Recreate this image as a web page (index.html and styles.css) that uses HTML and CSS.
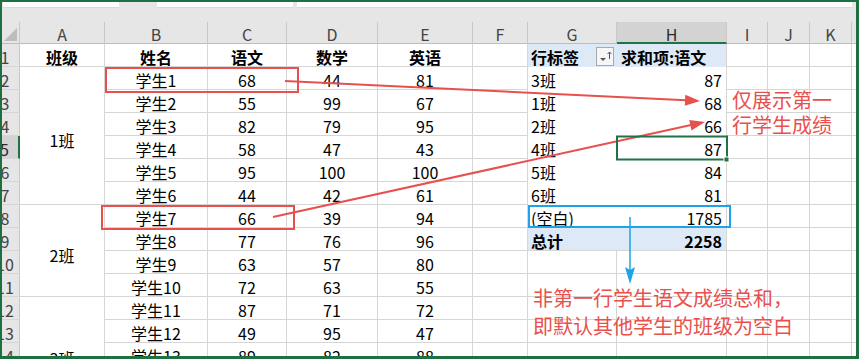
FILE: index.html
```html
<!DOCTYPE html>
<html lang="zh-CN">
<head>
<meta charset="utf-8">
<title>数据透视表</title>
<link rel="stylesheet" href="styles.css">
</head>
<body>
<div class="frame">
  <div class="topbar">
    <div class="tb tb1"></div><div class="tb tb2"></div><div class="tb tb3"></div>
  </div>
  <div class="band"></div>
  <div class="sheet">
    <div class="corner"><span class="tri"></span></div>
    <div class="ch">A</div><div class="ch">B</div><div class="ch">C</div><div class="ch">D</div><div class="ch">E</div><div class="ch">F</div><div class="ch">G</div><div class="ch sel">H</div><div class="ch">I</div><div class="ch">J</div><div class="ch">K</div><div class="ch"></div>

    <div class="rh">1</div>
    <div class="c ctr b">班级</div><div class="c ctr b">姓名</div><div class="c ctr b">语文</div><div class="c ctr b">数学</div><div class="c ctr b">英语</div><div class="c"></div>
    <div class="c pg pvh">行标签<span class="dd"><svg width="18" height="19" viewBox="0 0 18 19"><rect x="0.5" y="0.5" width="17" height="18" fill="#f6f6f6" stroke="#a9a9a9"/><polygon points="4,11 10,11 7,14" fill="#555"/><line x1="13.5" y1="5" x2="13.5" y2="12" stroke="#555" stroke-width="1"/><polyline points="11.5,7 13.5,5 15.5,7" fill="none" stroke="#555" stroke-width="1"/></svg></span></div>
    <div class="c ph pvh phl">求和项:语文</div>
    <div class="c"></div><div class="c"></div><div class="c"></div><div class="c"></div>

    <div class="rh">2</div>
    <div class="c m m1">1班</div>
    <div class="c ctr">学生1</div><div class="c ctr">68</div><div class="c ctr">44</div><div class="c ctr">81</div><div class="c"></div>
    <div class="c pg">3班</div><div class="c ph">87</div>
    <div class="c"></div><div class="c"></div><div class="c"></div><div class="c"></div>

    <div class="rh">3</div>
    <div class="c ctr">学生2</div><div class="c ctr">55</div><div class="c ctr">99</div><div class="c ctr">67</div><div class="c"></div>
    <div class="c pg">1班</div><div class="c ph">68</div>
    <div class="c"></div><div class="c"></div><div class="c"></div><div class="c"></div>

    <div class="rh">4</div>
    <div class="c ctr">学生3</div><div class="c ctr">82</div><div class="c ctr">79</div><div class="c ctr">95</div><div class="c"></div>
    <div class="c pg">2班</div><div class="c ph">66</div>
    <div class="c"></div><div class="c"></div><div class="c"></div><div class="c"></div>

    <div class="rh sel">5</div>
    <div class="c ctr">学生4</div><div class="c ctr">58</div><div class="c ctr">47</div><div class="c ctr">43</div><div class="c"></div>
    <div class="c pg">4班</div><div class="c ph">87</div>
    <div class="c"></div><div class="c"></div><div class="c"></div><div class="c"></div>

    <div class="rh">6</div>
    <div class="c ctr">学生5</div><div class="c ctr">95</div><div class="c ctr">100</div><div class="c ctr">100</div><div class="c"></div>
    <div class="c pg">5班</div><div class="c ph">84</div>
    <div class="c"></div><div class="c"></div><div class="c"></div><div class="c"></div>

    <div class="rh">7</div>
    <div class="c ctr">学生6</div><div class="c ctr">44</div><div class="c ctr">42</div><div class="c ctr">61</div><div class="c"></div>
    <div class="c pg">6班</div><div class="c ph">81</div>
    <div class="c"></div><div class="c"></div><div class="c"></div><div class="c"></div>

    <div class="rh">8</div>
    <div class="c m m2">2班</div>
    <div class="c ctr">学生7</div><div class="c ctr">66</div><div class="c ctr">39</div><div class="c ctr">94</div><div class="c"></div>
    <div class="c pg">(空白)</div><div class="c ph">1785</div>
    <div class="c"></div><div class="c"></div><div class="c"></div><div class="c"></div>

    <div class="rh">9</div>
    <div class="c ctr">学生8</div><div class="c ctr">77</div><div class="c ctr">76</div><div class="c ctr">96</div><div class="c"></div>
    <div class="c pg tot">总计</div><div class="c ph tot">2258</div>
    <div class="c"></div><div class="c"></div><div class="c"></div><div class="c"></div>

    <div class="rh">10</div>
    <div class="c ctr">学生9</div><div class="c ctr">63</div><div class="c ctr">57</div><div class="c ctr">80</div><div class="c"></div>
    <div class="c"></div><div class="c"></div>
    <div class="c"></div><div class="c"></div><div class="c"></div><div class="c"></div>

    <div class="rh">11</div>
    <div class="c ctr">学生10</div><div class="c ctr">72</div><div class="c ctr">63</div><div class="c ctr">55</div><div class="c"></div>
    <div class="c"></div><div class="c"></div>
    <div class="c"></div><div class="c"></div><div class="c"></div><div class="c"></div>

    <div class="rh">12</div>
    <div class="c m m3">3班</div>
    <div class="c ctr">学生11</div><div class="c ctr">87</div><div class="c ctr">71</div><div class="c ctr">72</div><div class="c"></div>
    <div class="c"></div><div class="c"></div>
    <div class="c"></div><div class="c"></div><div class="c"></div><div class="c"></div>

    <div class="rh">13</div>
    <div class="c ctr">学生12</div><div class="c ctr">49</div><div class="c ctr">95</div><div class="c ctr">47</div><div class="c"></div>
    <div class="c"></div><div class="c"></div>
    <div class="c"></div><div class="c"></div><div class="c"></div><div class="c"></div>

    <div class="rh">14</div>
    <div class="c ctr">学生13</div><div class="c ctr">89</div><div class="c ctr">82</div><div class="c ctr">88</div><div class="c"></div>
    <div class="c"></div><div class="c"></div>
    <div class="c"></div><div class="c"></div><div class="c"></div><div class="c"></div>

    <div class="rh">15</div>
    <div class="c"></div><div class="c"></div><div class="c"></div><div class="c"></div><div class="c"></div>
    <div class="c"></div><div class="c"></div>
    <div class="c"></div><div class="c"></div><div class="c"></div><div class="c"></div>

    <div class="rh">16</div>
    <div class="c"></div><div class="c"></div><div class="c"></div><div class="c"></div><div class="c"></div>
    <div class="c"></div><div class="c"></div>
    <div class="c"></div><div class="c"></div><div class="c"></div><div class="c"></div>
  </div>

  <svg class="overlay" width="859" height="359" viewBox="0 0 859 359">
    <rect x="106" y="68" width="192" height="24" fill="none" stroke="#e8504e" stroke-width="2"/>
    <rect x="102" y="206" width="192" height="23" fill="none" stroke="#e8504e" stroke-width="2"/>
    <line x1="285" y1="81" x2="686" y2="100.3" stroke="#e8504e" stroke-width="2"/>
    <polygon points="700,101 684.8,105.8 685.3,94.8" fill="#e8504e"/>
    <line x1="273" y1="217" x2="691" y2="125.1" stroke="#e8504e" stroke-width="2"/>
    <polygon points="705,122 691.5,130.6 689.2,119.9" fill="#e8504e"/>
    <rect x="529" y="206" width="201" height="21" fill="none" stroke="#1ea3e8" stroke-width="2"/>
    <line x1="630" y1="217" x2="630" y2="272" stroke="#1ea3e8" stroke-width="1.5"/>
    <polygon points="625,267 630,270 635,267 630,284" fill="#1ea3e8"/>
    <rect x="617" y="136.5" width="110" height="23" fill="none" stroke="#217346" stroke-width="2"/>
    <rect x="724" y="157" width="5" height="5" fill="#217346" stroke="#ffffff" stroke-width="1"/>
  </svg>

  <div class="note note1">仅展示第一<br>行学生成绩</div>
  <div class="note note2">非第一行学生语文成绩总和，<br>即默认其他学生的班级为空白</div>
</div>
</body>
</html>
```

FILE: styles.css
```css
* {
  box-sizing: border-box;
  margin: 0;
  padding: 0;
}

body {
  margin: 0;
  background: #ffffff;
  font-family: "Noto Sans CJK SC", "Noto Sans", sans-serif;
}

.frame {
  position: relative;
  width: 859px;
  height: 359px;
  border-style: solid;
  border-color: #1e6f42;
  border-width: 2px 3px 3px 2px;
  overflow: hidden;
  background: #ffffff;
}

.topbar {
  display: flex;
  height: 7px;
  background: #e6e6e6;
}

.tb {
  height: 6px;
  background: #ffffff;
  border-bottom: 1px solid #d8d8d8;
}

.tb1 { margin-left: 1px; width: 116px; }
.tb2 { margin-left: 38px; width: 136px; }
.tb3 { margin-left: 4px; width: 555px; }

.band {
  height: 13px;
  background: #e6e6e6;
}

.sheet {
  display: grid;
  margin-left: -11px;
  grid-template-columns: 29px 85px 103px 79px 91px 95px 55px 89px 110px 41px 42px 42px 60px;
  grid-template-rows: 22px repeat(16, 23px);
  font-size: 16px;
  color: #000;
}

.corner {
  display: flex;
  justify-content: flex-end;
  align-items: flex-end;
  padding: 0 2px 2px 0;
  background: #e6e6e6;
  border-right: 1px solid #c8c8c8;
  border-bottom: 1px solid #bdbdbd;
}

.tri {
  width: 13px;
  height: 13px;
  background: #bdbdbd;
  clip-path: polygon(100% 0, 100% 100%, 0 100%);
}

.ch {
  background: #e6e6e6;
  border-right: 1px solid #c8c8c8;
  border-bottom: 1px solid #bdbdbd;
  text-align: center;
  color: #444;
  line-height: 20px;
  padding-top: 2px;
}

.ch.sel {
  background: #d3d3d3;
  border-bottom: 2px solid #217346;
  color: #2a2a2a;
}

.rh {
  background: #e6e6e6;
  border-right: 1px solid #c8c8c8;
  border-bottom: 1px solid #d6d6d6;
  text-align: center;
  color: #444;
  line-height: 20px;
  padding-top: 3px;
  white-space: nowrap;
}

.rh.sel {
  background: #d3d3d3;
  border-right: 2px solid #217346;
  color: #2a2a2a;
}

.c {
  border-right: 1px solid #d6d6d6;
  border-bottom: 1px solid #d6d6d6;
  line-height: 20px;
  padding: 3px 2px 0;
  white-space: nowrap;
}

.ctr { text-align: center; }
.b { font-weight: bold; }

.m {
  display: flex;
  align-items: center;
  justify-content: center;
  padding-top: 8px;
}
.m1 { grid-row: span 6; }
.m2 { grid-row: span 4; }
.m3 { grid-row: span 5; }

.pg {
  border-right: 0;
  border-bottom: 0;
  padding-left: 3px;
}

.ph {
  border-bottom: 0;
  text-align: right;
  padding-right: 4px;
}

.pvh {
  background: #dde9f6;
  font-weight: bold;
}

.ph.phl {
  text-align: left;
  padding-left: 4px;
}

.pg.pvh {
  display: flex;
  align-items: center;
  justify-content: space-between;
  padding-top: 2px;
  padding-right: 3px;
}

.dd {
  display: flex;
  width: 18px;
  height: 19px;
}

.tot {
  background: #dde9f6;
  font-weight: bold;
  border-bottom: 1px solid #d6d6d6;
}

.overlay {
  position: absolute;
  left: -2px;
  top: -2px;
}

.note {
  position: absolute;
  color: #e8504e;
  font-size: 20px;
  white-space: nowrap;
}

.note1 {
  left: 730px;
  top: 85px;
  line-height: 25px;
}

.note2 {
  left: 531px;
  top: 282px;
  line-height: 28px;
}
```
